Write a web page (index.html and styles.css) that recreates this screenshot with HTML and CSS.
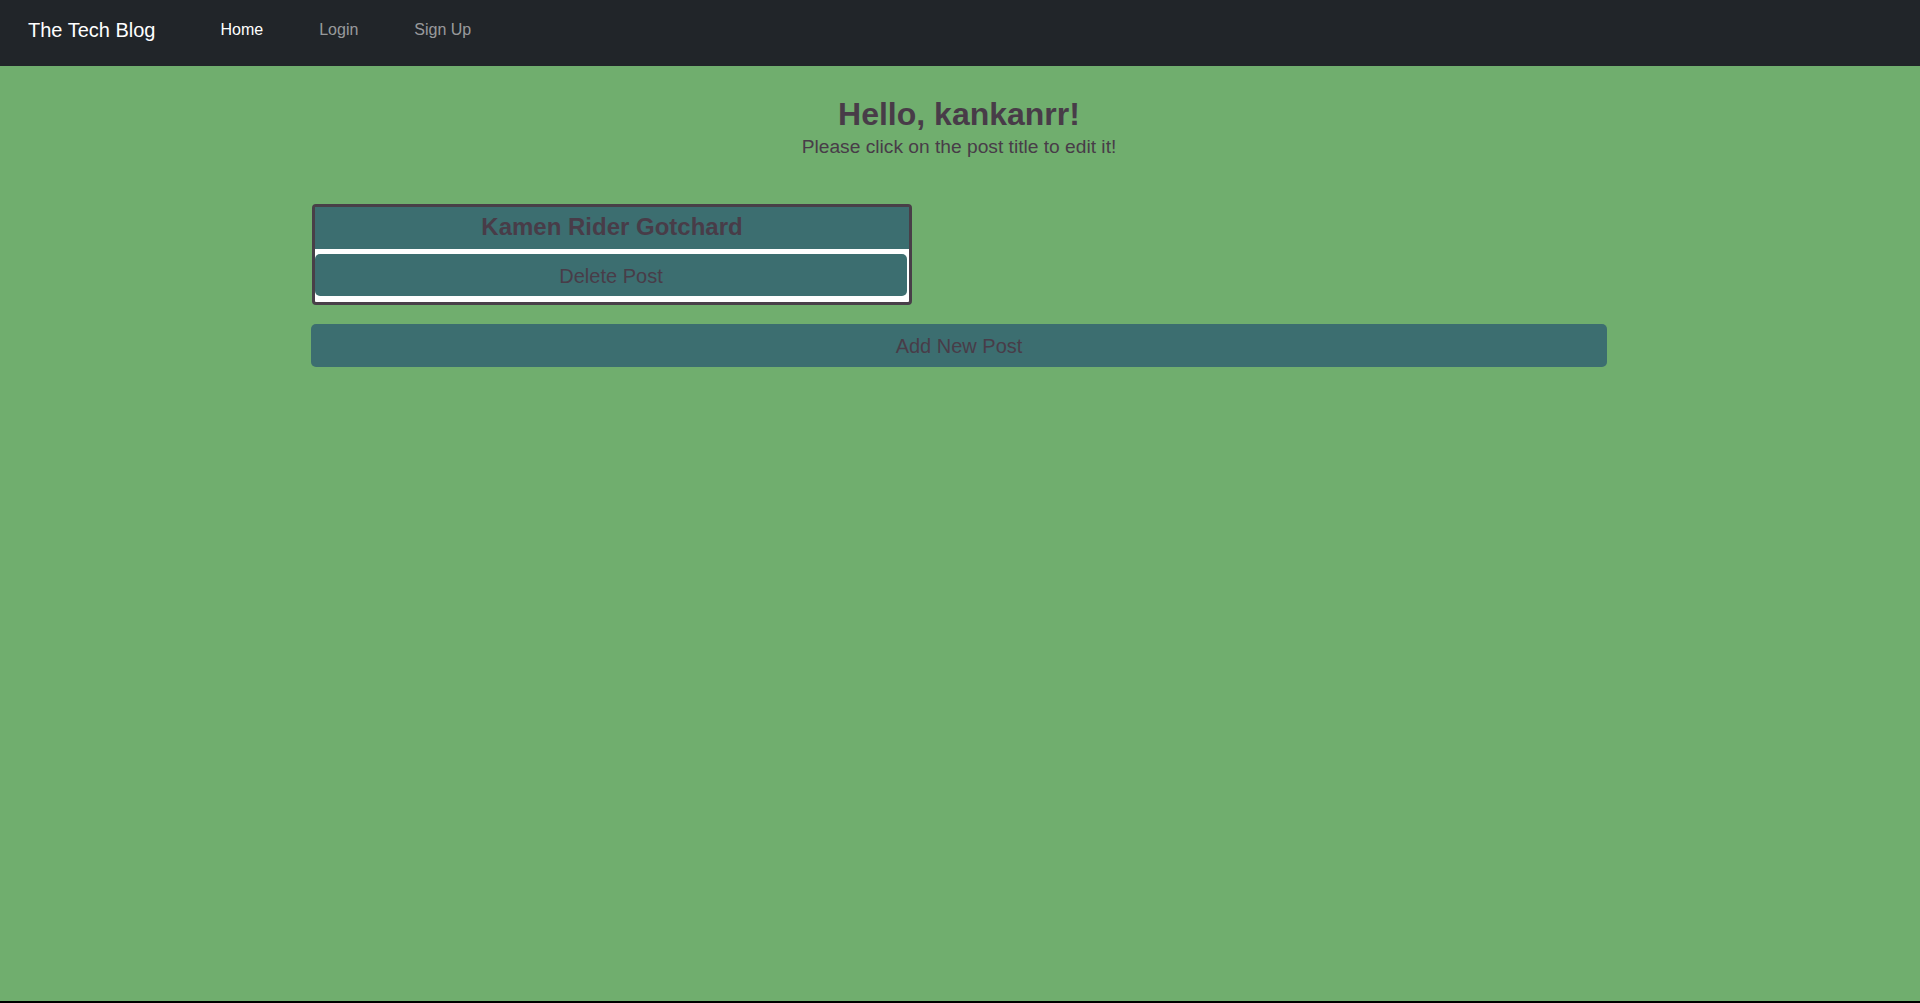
FILE: index.html
```html
<!DOCTYPE html>
<html lang="en">
<head>
<meta charset="utf-8">
<title>The Tech Blog</title>
<link rel="stylesheet" href="styles.css">
</head>
<body>
<nav class="navbar">
  <a class="brand" href="#">The Tech Blog</a>
  <ul class="nav-links">
    <li><a class="nav-link active" href="#">Home</a></li>
    <li><a class="nav-link" href="#">Login</a></li>
    <li><a class="nav-link" href="#">Sign Up</a></li>
  </ul>
</nav>
<main class="main">
  <div class="container">
    <h2 class="greeting">Hello, kankanrr!</h2>
    <p class="subtitle">Please click on the post title to edit it!</p>
    <div class="posts">
      <div class="post-card">
        <h3 class="post-title">Kamen Rider Gotchard</h3>
        <button class="btn delete-btn">Delete Post</button>
      </div>
    </div>
    <button class="btn add-btn">Add New Post</button>
  </div>
</main>
</body>
</html>
```
FILE: styles.css
```css
html {
  background: #000;
}
body {
  margin: 0;
  font-family: "Liberation Sans", Arial, sans-serif;
  color: #483c48;
}
.navbar {
  height: 66px;
  background: #212529;
  display: flex;
  align-items: flex-start;
  box-sizing: border-box;
  padding-left: 28px;
}
.brand {
  display: block;
  margin-top: 14.5px;
  font-size: 20px;
  line-height: 30px;
  color: #fff;
  text-decoration: none;
}
.nav-links {
  list-style: none;
  display: flex;
  margin: 17.5px 0 0 65px;
  padding: 0;
}
.nav-link {
  display: block;
  font-size: 16px;
  line-height: 24px;
  color: rgba(255, 255, 255, 0.55);
  text-decoration: none;
  margin-right: 56px;
}
.nav-link.active {
  color: #fff;
}
.main {
  background: #70ae6e;
  min-height: calc(100vh - 68px);
}
.container {
  width: 1296px;
  margin: 0 0 0 calc(50% - 649px);
  padding-top: 28.5px;
}
.greeting {
  margin: 0;
  text-align: center;
  font-size: 32px;
  line-height: 38.4px;
  font-weight: 700;
}
.subtitle {
  margin: 0;
  text-align: center;
  font-size: 19.2px;
  line-height: 28.8px;
}
.posts {
  margin-top: 42px;
  padding-left: 1px;
  display: flex;
}
.post-card {
  width: 600px;
  box-sizing: border-box;
  border: 3px solid #483f48;
  border-radius: 4px;
  background: #fff;
  padding-bottom: 6px;
}
.post-title {
  margin: 0;
  background: #3c6e70;
  text-align: center;
  font-size: 24px;
  line-height: 28.8px;
  font-weight: 700;
  padding: 6px 0 7px;
}
.btn {
  display: block;
  border: none;
  background: #3c6e70;
  color: #483c48;
  font-family: "Liberation Sans", Arial, sans-serif;
  font-size: 20px;
  line-height: 30px;
  border-radius: 5px;
  cursor: pointer;
}
.delete-btn {
  margin-top: 5px;
  width: calc(100% - 2px);
  height: 42px;
  padding: 7px 0 5px;
}
.add-btn {
  margin-top: 19.5px;
  width: 100%;
  height: 43px;
  padding: 7px 0 6px;
}
```
